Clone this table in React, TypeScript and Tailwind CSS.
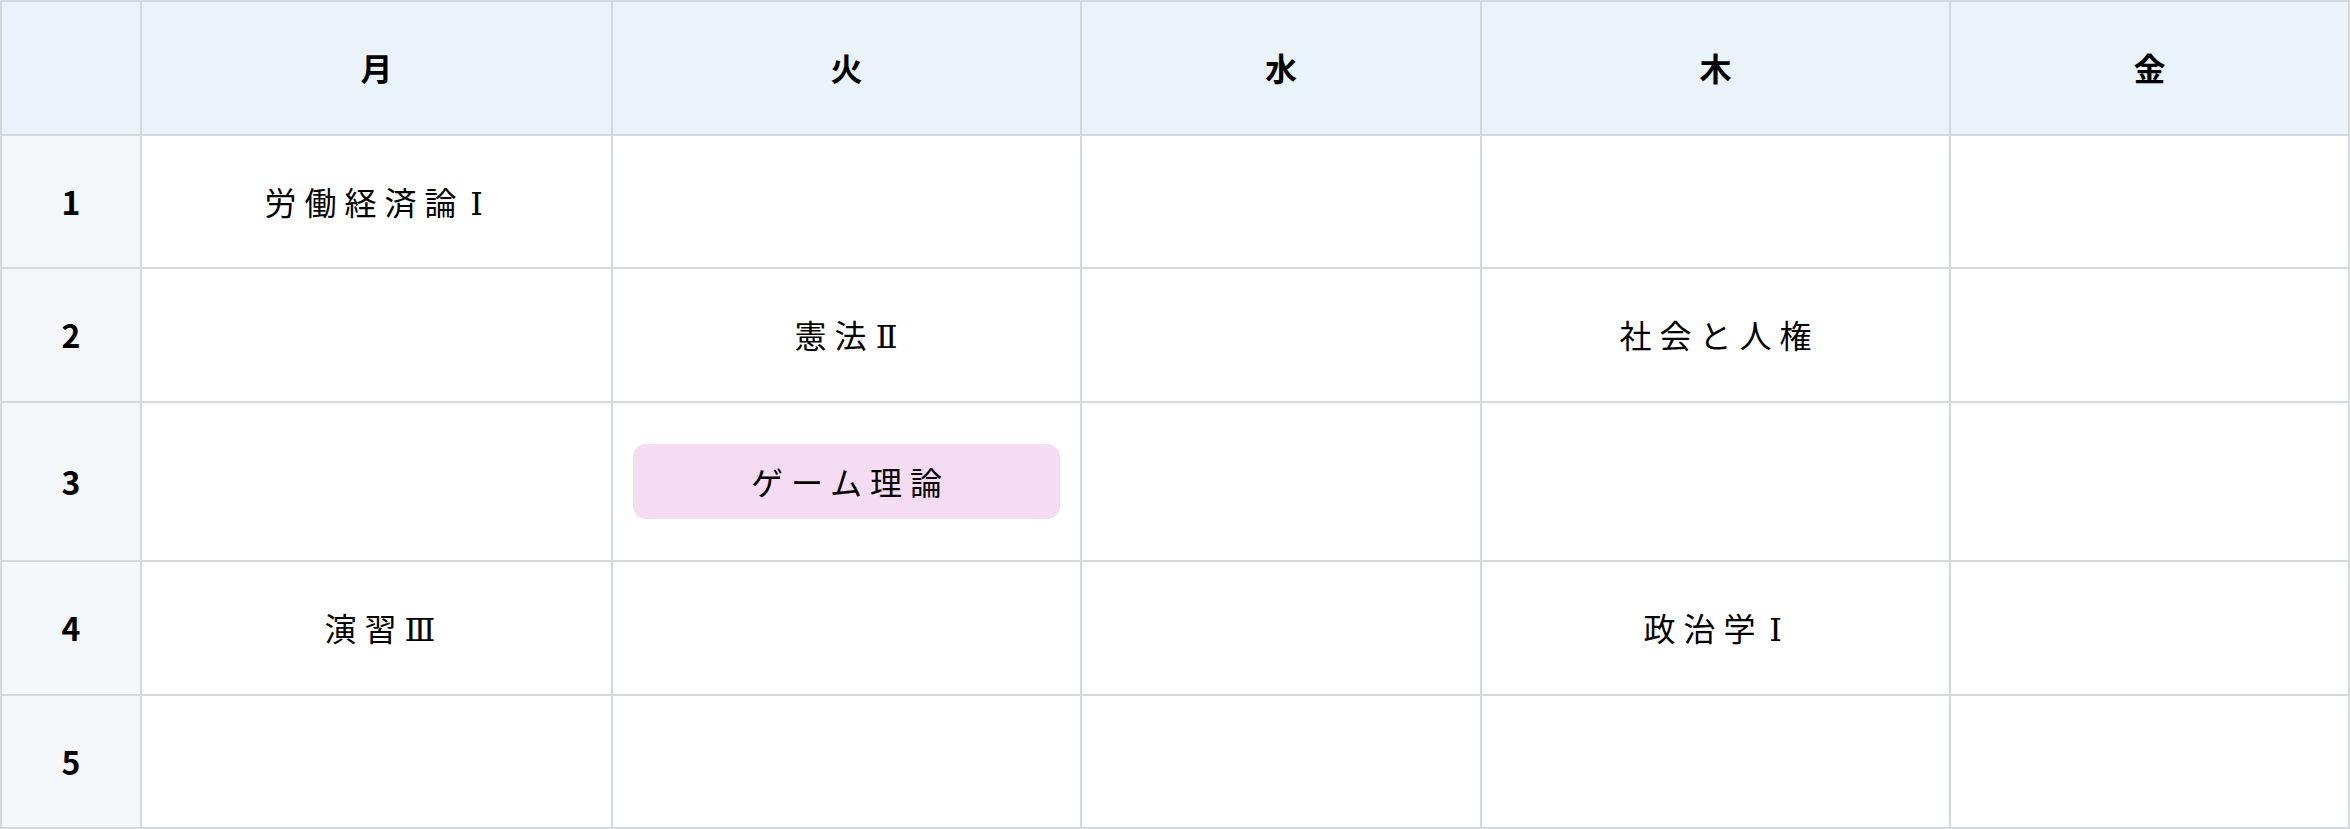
const days = ["月", "火", "水", "木", "金"];

const timetable: (string | null)[][] = [
  ["労働経済論Ⅰ", null, null, null, null],
  [null, "憲法Ⅱ", null, "社会と人権", null],
  [null, "ゲーム理論", null, null, null],
  ["演習Ⅲ", null, null, "政治学Ⅰ", null],
  [null, null, null, null, null],
];

// highlighted (current) class
const highlight = { period: 2, day: 1 };

function Subject({ name }: { name: string }) {
  // roman numeral suffix gets a full-width serif glyph
  const m = name.match(/^(.*?)([Ⅰ-Ⅻ])$/);
  if (!m) return <>{name}</>;
  return (
    <>
      {m[1]}
      <span className="inline-block w-[1em] text-center font-['DejaVu_Serif',serif] leading-none">{m[2]}</span>
    </>
  );
}

export default function App() {
  return (
    <div
      lang="ja"
      className="bg-white text-black"
      style={{ fontFamily: '"Noto Sans CJK JP", "Noto Sans", sans-serif' }}
    >
      <div className="grid grid-cols-[140px_471px_469px_400px_469px_399px] border-l-2 border-t-2 border-[#d4d9dd]">
        {/* header */}
        <div className="border-r-2 border-b-2 border-[#d4d9dd] bg-[#eaf3f9]" />
        {days.map((d) => (
          <div
            key={d}
            className="flex items-center justify-center border-r-2 border-b-2 border-[#d4d9dd] bg-[#eaf3f9] py-[41.25px] text-[32px] leading-[49px] font-bold"
          >
            {d}
          </div>
        ))}

        {/* rows */}
        {timetable.map((row, p) => (
          <div key={p} className="contents">
            <div className="flex items-center justify-center border-r-2 border-b-2 border-[#d4d9dd] bg-[#f3f7fa] text-[32px] leading-[49px] font-bold">
              {p + 1}
            </div>
            {row.map((subject, d) => {
              const isHl = p === highlight.period && d === highlight.day;
              return (
                <div
                  key={d}
                  className="flex items-center border-r-2 border-b-2 border-[#d4d9dd] bg-white px-5 py-[41.25px]"
                >
                  {subject && (
                    <div
                      className={`h-full w-full text-center text-[32px] leading-[49px] tracking-[0.25em] ${
                        isHl ? "rounded-[13px] bg-[#f5dcf2] py-[13px] pl-[8px]" : "h-[49px] pl-[8px]"
                      }`}
                    >
                      <Subject name={subject} />
                    </div>
                  )}
                  {!subject && <div className="h-[49px]" />}
                </div>
              );
            })}
          </div>
        ))}
      </div>
    </div>
  );
}
